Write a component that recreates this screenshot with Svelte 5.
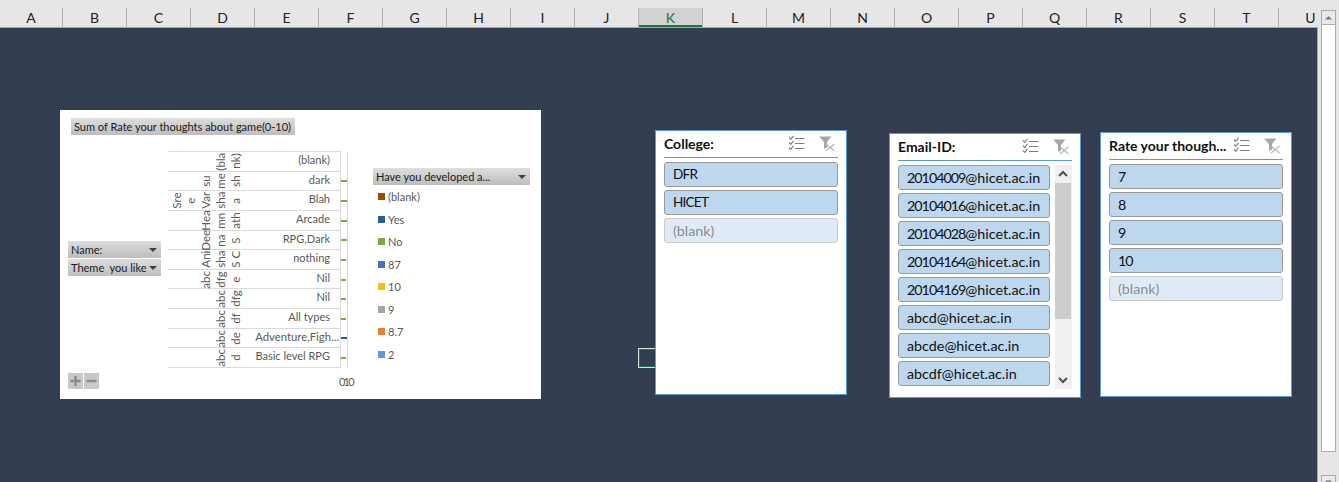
<script>
  const columns = "ABCDEFGHIJKLMNOPQRSTU".split("");

  // rotated cell text per row: [col1, col2, col3, col4, col5], then row label
  const rows = [
    { cells: ["", "", "", "(bla", "nk)"], label: "(blank)" },
    { cells: ["", "", "su", "me", "sh"], label: "dark", bar: "#70ad47", w: 6 },
    { cells: ["Sre", "e", "Var", "sha", "a"], label: "Blah", bar: "#70ad47", w: 6 },
    { cells: ["", "", "Hea", "mn", "ath"], label: "Arcade", bar: "#70ad47", w: 6 },
    { cells: ["", "", "Dee", "na", "S"], label: "RPG,Dark", bar: "#70ad47", w: 6 },
    { cells: ["", "", "Ani", "sha", "S C"], label: "nothing", bar: "#70ad47", w: 5 },
    { cells: ["", "", "abc", "dfg", "e"], label: "Nil", bar: "#70ad47", w: 5 },
    { cells: ["", "", "", "abc", "dfg"], label: "Nil", bar: "#70ad47", w: 5 },
    { cells: ["", "", "", "abc", "df"], label: "All types", bar: "#70ad47", w: 5 },
    { cells: ["", "", "", "abc", "de"], label: "Adventure,Figh...", bar: "#255e91", w: 6, long: true },
    { cells: ["", "", "", "abc", "d"], label: "Basic level RPG", bar: "#70ad47", w: 5 },
  ];

  const legend = [
    ["(blank)", "#9e480e"],
    ["Yes", "#255e91"],
    ["No", "#70ad47"],
    ["87", "#4472c4"],
    ["10", "#ffc000"],
    ["9", "#a5a5a5"],
    ["8.7", "#ed7d31"],
    ["2", "#5b9bd5"],
  ];

  const slicers = [
    { title: "College:", x: 655, y: 130, items: ["DFR", "HICET"], blank: true },
    {
      title: "Email-ID:",
      x: 889,
      y: 133,
      scroll: true,
      items: [
        "20104009@hicet.ac.in",
        "20104016@hicet.ac.in",
        "20104028@hicet.ac.in",
        "20104164@hicet.ac.in",
        "20104169@hicet.ac.in",
        "abcd@hicet.ac.in",
        "abcde@hicet.ac.in",
        "abcdf@hicet.ac.in",
      ],
    },
    { title: "Rate your though...", x: 1100, y: 132, items: ["7", "8", "9", "10"], blank: true },
  ];

  // leading digits run narrower than the rest of the text
  const split = (s) => s.match(/^(\d*)(.*)$/).slice(1);
  const isCaps = (s) => /^[A-Z]+$/.test(s);
</script>

<div class="sheet">
  <div class="main">
    <div class="colheads">
      {#each columns as c}
        <div class="col" class:active={c === "K"}>{c}</div>
      {/each}
    </div>

    <div class="canvas">
      <div class="cell-cursor"></div>

      <div class="chart">
        <div class="pill title">Sum of Rate your thoughts about game(0-10)</div>

        <div class="fields">
          <div class="pill field">Name:<span class="caret"></span></div>
          <div class="pill field">Theme &nbsp;you like<span class="caret"></span></div>
        </div>

        <div class="plot">
          {#each rows as r}
            <div class="row">
              {#each r.cells as t}
                <div class="rot"><span>{t}</span></div>
              {/each}
              <div class="label" class:long={r.long}>{r.label}</div>
              <div class="bars">
                {#if r.bar}
                  <div class="bar" style="width: {r.w}px; background: {r.bar}"></div>
                {/if}
              </div>
            </div>
          {/each}
        </div>

        <div class="legend">
          <div class="pill legend-head">Have you developed a...<span class="caret"></span></div>
          <div class="legend-items">
            {#each legend as [name, color]}
              <div class="legend-item">
                <span class="swatch" style="background: {color}"></span>{name}
              </div>
            {/each}
          </div>
        </div>

        <div class="zoom-btns">
          <div class="zoom-btn">
            <svg width="15" height="16" viewBox="0 0 15 16"><path d="M2.5 8h10M7.5 3v10" stroke="#8c8c8c" stroke-width="2.4" /></svg>
          </div>
          <div class="zoom-btn">
            <svg width="15" height="16" viewBox="0 0 15 16"><path d="M2.5 8h10" stroke="#8c8c8c" stroke-width="2.4" /></svg>
          </div>
        </div>

        <div class="axis">010</div>
      </div>

      {#each slicers as s}
        <div class="slicer" style="left: {s.x}px; top: {s.y - 28}px">
          <div class="slicer-head">
            <div class="slicer-title">{s.title}</div>
            <svg class="ico-multi" width="17" height="16" viewBox="0 0 17 16" fill="none" stroke="#7f7f7f">
              <path d="M1 2.5l1.8 1.8L5.5 0.8M1 7.5l1.8 1.8L5.5 5.8M1 12.5l1.8 1.8L5.5 10.8" stroke-width="1.1" />
              <path d="M7 3.5h9.5M7 8.5h9.5M7 13.5h9.5" />
            </svg>
            <svg class="ico-clear" width="17" height="16" viewBox="0 0 17 16">
              <path d="M0 0.5h12.5L8 6v5.5L5 13V6z" fill="#a6a6a6" />
              <path d="M7 8l8.5 7M15.5 8L7 15" stroke="#b8b8b8" stroke-width="1.3" fill="none" />
            </svg>
          </div>
          <div class="slicer-body">
            <div class="items">
              {#each s.items as item}
                {@const [digits, rest] = split(item)}
                <div class="item" class:caps={isCaps(item)}><span class="digits">{digits}</span>{rest}</div>
              {/each}
              {#if s.blank}
                <div class="item blank">(blank)</div>
              {/if}
            </div>
            {#if s.scroll}
              <div class="vscroll">
                <div class="vbtn">
                  <svg width="16" height="18" viewBox="0 0 16 18"><path d="M4 11l4-4 4 4" fill="none" stroke="#505050" stroke-width="2" /></svg>
                </div>
                <div class="vthumb"></div>
                <div class="vtrack"></div>
                <div class="vbtn">
                  <svg width="16" height="18" viewBox="0 0 16 18"><path d="M4 7l4 4 4-4" fill="none" stroke="#505050" stroke-width="2" /></svg>
                </div>
              </div>
            {/if}
          </div>
        </div>
      {/each}
    </div>
  </div>

  <div class="page-scroll">
    <div class="sbtn">
      <svg width="13" height="13" viewBox="0 0 13 13"><path d="M3 8.5L6.5 5 10 8.5z" fill="#7a7a7a" /></svg>
    </div>
    <div class="sthumb"></div>
    <div class="sspace"></div>
    <div class="sbtn">
      <svg width="13" height="13" viewBox="0 0 13 13"><path d="M3 4.5L6.5 8 10 4.5z" fill="#7a7a7a" /></svg>
    </div>
  </div>
</div>

<style>
  :global(body) {
    margin: 0;
  }

  .sheet {
    display: flex;
    width: 1339px;
    height: 482px;
    overflow: hidden;
    background: #e6e6e6;
    font-family: Lato, "Open Sans", sans-serif;
  }

  .main {
    width: 1318px;
    overflow: hidden;
    display: flex;
    flex-direction: column;
  }

  .colheads {
    display: flex;
    height: 28px;
    flex: none;
    box-sizing: border-box;
    background: #e6e6e6;
    border-bottom: 1px solid #a6a6a6;
    padding-top: 8px;
  }

  .col {
    width: 64px;
    flex: none;
    box-sizing: border-box;
    border-right: 1px solid #b0b0b0;
    text-align: center;
    font-size: 14px;
    line-height: 19px;
    color: #222;
  }

  .col:first-child {
    width: 63px;
  }

  .col.active {
    background: #d2d2d2;
    color: #1f6e43;
    box-shadow: inset 0 -2px 0 #217346;
  }

  .canvas {
    position: relative;
    flex: 1;
    background: #333f50;
    border-right: 1px solid #a6a6a6;
  }

  .cell-cursor {
    position: absolute;
    left: 638px;
    top: 320px;
    width: 30px;
    height: 20px;
    box-sizing: border-box;
    border: 1px solid #cfe6d9;
    box-shadow: inset 0 0 0 1px #217346;
  }

  .chart {
    position: absolute;
    left: 60px;
    top: 82px;
    width: 481px;
    height: 289px;
    background: #fff;
    color: #595959;
    font-size: 11px;
  }

  .pill {
    position: absolute;
    box-sizing: border-box;
    height: 17px;
    background: linear-gradient(#dedede, #bdbdbd);
    color: #1a1a1a;
    line-height: 17px;
    padding-left: 3px;
    white-space: nowrap;
    font-size: 11px;
  }

  .title {
    left: 11px;
    top: 8px;
    width: 224px;
  }

  .fields {
    position: absolute;
    left: 8px;
    top: 131px;
    width: 93px;
    height: 35px;
  }

  .field {
    position: relative;
    width: 93px;
    margin-bottom: 1px;
  }

  .caret {
    position: absolute;
    right: 4px;
    top: 7px;
    border-left: 4px solid transparent;
    border-right: 4px solid transparent;
    border-top: 4px solid #404040;
  }

  .plot {
    position: absolute;
    left: 108px;
    top: 41px;
    width: 173px;
    border-top: 1px solid #d9d9d9;
  }

  .row {
    display: flex;
    height: 18.64px;
    border-bottom: 1px solid #d9d9d9;
    box-sizing: content-box;
    position: relative;
    padding-left: 1.6px;
  }

  .rot {
    width: 14.75px;
    flex: none;
    position: relative;
  }

  .rot span {
    position: absolute;
    left: 0;
    bottom: 0;
    width: 14.75px;
    height: 100%;
    display: flex;
    align-items: center;
    justify-content: center;
    writing-mode: vertical-rl;
    transform: rotate(180deg);
    line-height: 14.75px;
    white-space: nowrap;
    font-size: 11.5px;
  }

  .label {
    flex: 1;
    padding-right: 11px;
    text-align: right;
    line-height: 16px;
    white-space: nowrap;
    font-size: 11px;
  }

  .label.long {
    padding-right: 2px;
    font-size: 11.3px;
  }

  .bars {
    position: absolute;
    left: 172px;
    top: 0;
    bottom: -1px;
    width: 8px;
    box-sizing: border-box;
    display: flex;
    align-items: center;
    border-left: 1px solid #d9d9d9;
    border-right: 1px solid #d9d9d9;
  }

  .bar {
    height: 2px;
    flex: none;
  }

  .legend {
    position: absolute;
    left: 313px;
    top: 58px;
    width: 157px;
  }

  .legend-head {
    position: relative;
    width: 157px;
  }

  .legend-items {
    display: flex;
    flex-direction: column;
    margin-top: 0.5px;
  }

  .legend-item {
    height: 22.5px;
    display: flex;
    align-items: center;
    padding-left: 5px;
    gap: 3px;
  }

  .swatch {
    width: 7px;
    height: 7px;
    flex: none;
  }

  .zoom-btns {
    position: absolute;
    left: 8px;
    top: 263px;
    display: flex;
    gap: 1px;
  }

  .zoom-btn {
    width: 15px;
    height: 16px;
    background: #c8c8c8;
    display: flex;
  }

  .axis {
    position: absolute;
    left: 279px;
    top: 265px;
    letter-spacing: -1.8px;
    line-height: 14px;
  }

  .slicer {
    position: absolute;
    width: 192px;
    height: 265px;
    box-sizing: border-box;
    background: #fff;
    border: 1px solid #5b9bd5;
    padding: 0 8px;
    color: #111;
    display: flex;
    flex-direction: column;
  }

  .slicer-head {
    height: 27px;
    flex: none;
    box-sizing: border-box;
    border-bottom: 1px solid #5b9bd5;
    display: flex;
    align-items: center;
    position: relative;
  }

  .slicer-title {
    font-weight: 700;
    font-size: 14px;
    white-space: nowrap;
    padding-bottom: 1px;
  }

  .ico-multi {
    position: absolute;
    left: 124px;
    top: 4px;
  }

  .ico-clear {
    position: absolute;
    left: 155px;
    top: 5px;
  }

  .slicer-body {
    display: flex;
    margin-top: 4px;
    gap: 5px;
  }

  .items {
    flex: 1;
    display: flex;
    flex-direction: column;
    gap: 3px;
  }

  .item {
    height: 25px;
    box-sizing: border-box;
    background: #bdd7ee;
    border: 1px solid #999;
    border-radius: 3px;
    padding-left: 8px;
    font-size: 14.3px;
    line-height: 23px;
    white-space: nowrap;
  }

  .item.caps {
    font-size: 13.6px;
    letter-spacing: -0.8px;
  }

  .digits {
    letter-spacing: -1px;
  }

  .item.blank {
    background: #deebf7;
    border-color: #ccc;
    color: #8c8c8c;
  }

  .vscroll {
    width: 17px;
    flex: none;
    height: 224px;
    background: #f0f0f0;
    display: flex;
    flex-direction: column;
  }

  .vbtn {
    height: 18px;
    flex: none;
    display: flex;
  }

  .vthumb {
    height: 136px;
    width: 16px;
    flex: none;
    background: #cdcdcd;
  }

  .vtrack {
    flex: 1;
  }

  .page-scroll {
    width: 21px;
    box-sizing: border-box;
    padding: 10px 3px 0;
    display: flex;
    flex-direction: column;
    height: 490px;
  }

  .sbtn {
    height: 15px;
    width: 15px;
    box-sizing: border-box;
    flex: none;
    border: 1px solid #ababab;
    background: #e9e9e9;
    display: flex;
  }

  .sthumb {
    width: 15px;
    height: 427px;
    box-sizing: border-box;
    flex: none;
    background: #fff;
    border: 1px solid #ababab;
    border-top: 0;
  }

  .sspace {
    height: 23px;
    flex: none;
  }
</style>
